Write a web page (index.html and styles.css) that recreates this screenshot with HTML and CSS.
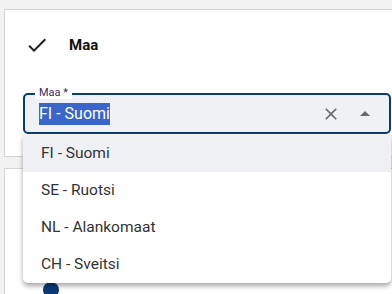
FILE: index.html
```html
<!DOCTYPE html>
<html lang="fi">
<head>
  <meta charset="UTF-8">
  <title>Maa</title>
  <link rel="stylesheet" href="styles.css">
</head>
<body>
  <div class="card first">
    <div class="heading">
      <svg class="check" width="24" height="24" viewBox="0 0 24 24"><path d="M9 16.17 4.83 12l-1.42 1.41L9 19 21 7l-1.41-1.41z" fill="#1f1f1f"/></svg>
      <span>Maa</span>
    </div>
    <div class="field">
      <label class="field_label">Maa *</label>
      <span class="value"><span class="selected">FI - Suomi</span></span>
      <svg class="clear" width="24" height="24" viewBox="0 0 24 24"><path d="M19 6.41 17.59 5 12 10.59 6.41 5 5 6.41 10.59 12 5 17.59 6.41 19 12 13.41 17.59 19 19 17.59 13.41 12z" fill="#6b6b6b"/></svg>
      <svg class="arrow" width="24" height="24" viewBox="0 0 24 24"><path d="M7 14l5-5 5 5z" fill="#6b6b6b"/></svg>
    </div>
    <ul class="options">
      <li class="active">FI - Suomi</li>
      <li>SE - Ruotsi</li>
      <li>NL - Alankomaat</li>
      <li>CH - Sveitsi</li>
    </ul>
  </div>
  <div class="card second">
    <span class="radio"></span>
  </div>
</body>
</html>
```

FILE: styles.css
```css
html,body{
    margin:0;
    height:100%;
    overflow:hidden;
}
body{
    background:#f2f2f2;
    font-family:Roboto,"Noto Sans",sans-serif;
    color:#222;
    padding:9px 0 0 4px;
    box-sizing:border-box;
    display:flex;
    flex-direction:column;
}
.card{
    background:#fff;
    border:1px solid #d4d4d4;
    border-right:none;
    box-sizing:border-box;
}
.first{
    position:relative;
    height:148px;
    flex:none;
    padding:19px 0 0 18px;
    z-index:1;
}
.heading{
    display:flex;
    align-items:center;
    height:31px;
    gap:20px;
    font-weight:bold;
    font-size:15px;
    color:#111;
}
.heading .check{
    margin-left:2px;
}
.field{
    margin-top:33px;
    width:368px;
    height:41px;
    box-sizing:border-box;
    border:2px solid #0b3a78;
    border-radius:5px;
    background:#f0f1f5;
    display:flex;
    align-items:center;
    padding:0 12px 0 14px;
    position:relative;
}
.field_label{
    position:absolute;
    left:10px;
    top:-9px;
    font-size:11px;
    line-height:13px;
    padding:0 4px;
    background:#fff;
    color:#3a2a6a;
}
.value{
    flex:1;
    font-size:16px;
}
.selected{
    background:#3a66cc;
    color:#fff;
    padding:1px 0 2px;
}
.clear{
    width:20px;
    height:20px;
    margin-right:12px;
}
.arrow{
    width:24px;
    height:24px;
}
.options{
    list-style:none;
    margin:0;
    padding:0;
    position:absolute;
    left:18px;
    top:125px;
    width:368px;
    background:#fff;
    border-radius:0 0 5px 5px;
    box-shadow:0 3px 5px rgba(0,0,0,0.35);
}
.options li{
    height:37px;
    line-height:37px;
    padding-left:18px;
    font-size:15.5px;
    color:#333;
}
.options li.active{
    background:#eff0f4;
}
.second{
    margin-top:11px;
    flex:1;
    border-bottom:none;
    padding:113px 0 0 38px;
}
.radio{
    display:block;
    width:16px;
    height:16px;
    border-radius:50%;
    background:#0b3a78;
}
```
